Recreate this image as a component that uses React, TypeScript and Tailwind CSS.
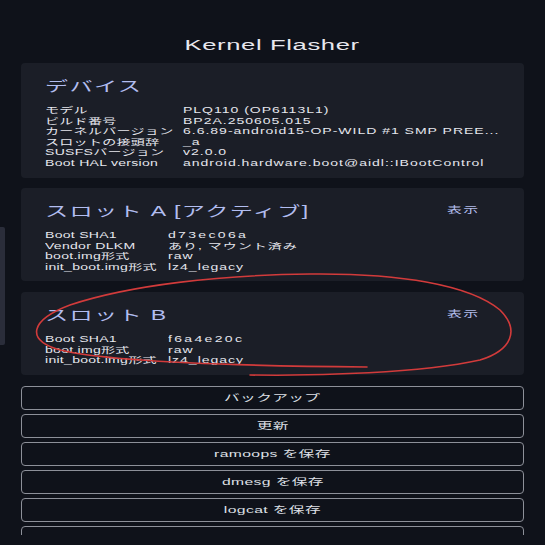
import React from "react";

const FONT = { fontFamily: '"Liberation Sans", "Noto Sans CJK JP", sans-serif' };

function S({ children, className = "" }: { children: React.ReactNode; className?: string }) {
  return <span className={"inline-block whitespace-nowrap scale-x-[1.65] " + className}>{children}</span>;
}

function Row({ label, value, w, mono }: { label: string; value: string; w: string; mono?: boolean }) {
  return (
    <div className="flex h-[10.6px] items-center text-[8.5px] leading-[10.6px] text-[#e6e7ee]">
      <div className={w + " shrink-0"}>
        <S className="origin-left tracking-[0.02em]">{label}</S>
      </div>
      <div>
        <S className={"origin-left " + (mono ? "tracking-[0.165em]" : "tracking-[0.07em]")}>{value}</S>
      </div>
    </div>
  );
}

function Card({
  title,
  rows,
  w,
  show,
}: {
  title: string;
  rows: [string, string, boolean?][];
  w: string;
  show?: boolean;
}) {
  return (
    <div className="rounded-[4px] bg-[#1b1e27] pl-[23.5px] pt-[12px] pb-[9px]">
      <div className="flex h-[22px] items-center justify-between">
        <div className="text-[14px] leading-[22px] text-[#b2bdf0]">
          <S className="origin-left tracking-[0.06em]">{title}</S>
        </div>
        {show && (
          <div className="w-[31px] mr-[46px] text-[9px] text-[#b2bcea]">
            <S className="origin-left tracking-[0.1em]">表示</S>
          </div>
        )}
      </div>
      <div className="mt-[8px]">
        {rows.map(([l, v, m]) => (
          <Row key={l} label={l} value={v} w={w} mono={m} />
        ))}
      </div>
    </div>
  );
}

function Btn({ label }: { label: string }) {
  return (
    <div className="flex h-[24px] items-center justify-center rounded-[4px] border border-[#8d9099] text-[9.5px] text-[#dfe0e7]">
      <S className="origin-center tracking-[0.025em]">{label}</S>
    </div>
  );
}

export default function App() {
  return (
    <div className="relative h-[545px] w-[545px] overflow-hidden bg-[#0f121a]" style={FONT}>
      <div className="h-[535px] overflow-hidden px-[21px] pt-[35px]">
        <div className="flex h-[20px] items-center justify-center text-[15.5px] text-[#e8e8ee]">
          <S className="origin-center tracking-[0.025em]">Kernel Flasher</S>
        </div>
        <div className="mt-[8px] flex flex-col gap-[10.5px]">
          <Card
            title="デバイス"
            w="w-[138px]"
            rows={[
              ["モデル", "PLQ110 (OP6113L1)"],
              ["ビルド番号", "BP2A.250605.015"],
              ["カーネルバージョン", "6.6.89-android15-OP-WILD #1 SMP PREE..."],
              ["スロットの接頭辞", "_a"],
              ["SUSFSバージョン", "v2.0.0"],
              ["Boot HAL version", "android.hardware.boot@aidl::IBootControl"],
            ]}
          />
          <Card
            title="スロット A [アクティブ]"
            w="w-[123px]"
            show
            rows={[
              ["Boot SHA1", "d73ec06a", true],
              ["Vendor DLKM", "あり, マウント済み"],
              ["boot.img形式", "raw"],
              ["init_boot.img形式", "lz4_legacy"],
            ]}
          />
          <Card
            title="スロット B"
            w="w-[123px]"
            show
            rows={[
              ["Boot SHA1", "f6a4e20c", true],
              ["boot.img形式", "raw"],
              ["init_boot.img形式", "lz4_legacy"],
            ]}
          />
        </div>
        <div className="mt-[11px] flex flex-col gap-[4px]">
          <Btn label="バックアップ" />
          <Btn label="更新" />
          <Btn label="ramoops を保存" />
          <Btn label="dmesg を保存" />
          <Btn label="logcat を保存" />
          <Btn label="" />
        </div>
      </div>
      <div className="absolute left-0 top-[227px] h-[118px] w-[5px] rounded-r-[2px] bg-[#2a2d3a]" />
      <svg className="pointer-events-none absolute left-0 top-0" width="545" height="545" viewBox="0 0 545 545">
        <path
          d="M 367 367 C 250 366, 110 362, 60 350 C 25 340, 30 320, 70 305 C 130 285, 220 275, 310 274 C 400 273, 470 285, 500 310 C 520 330, 512 350, 480 360 C 420 373, 320 376, 250 375"
          fill="none"
          stroke="#d23b3b"
          strokeWidth="1.6"
          strokeLinecap="round"
        />
      </svg>
    </div>
  );
}
